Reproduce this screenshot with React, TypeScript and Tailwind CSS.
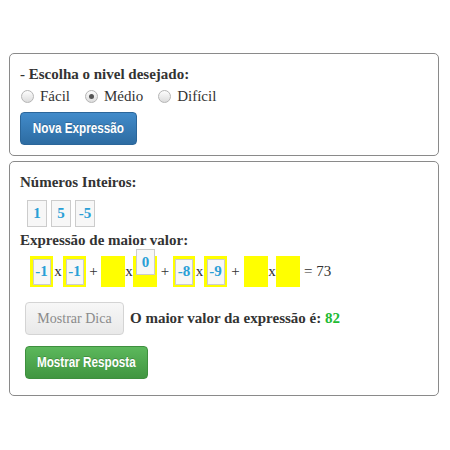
import { ReactNode } from "react";

function Radio({ label, checked }: { label: string; checked?: boolean }) {
  return (
    <label className="flex items-center mr-[15px]">
      <span className="w-[13px] h-[13px] rounded-full border border-[#b5b5b5] bg-gradient-to-b from-[#fdfdfd] to-[#dcdcdc] flex items-center justify-center">
        {checked && <span className="w-[5px] h-[5px] rounded-full bg-[#555]" />}
      </span>
      <span className="ml-[6px]">{label}</span>
    </label>
  );
}

// Liberation Sans squeezed to the width of Arial Narrow
function NarrowText({ children }: { children: ReactNode }) {
  return (
    <span className="inline-block whitespace-nowrap font-['Liberation_Sans',Arial,sans-serif] font-bold text-[15px] scale-x-[0.78] [text-shadow:0_-1px_0_rgba(0,0,0,0.2)]">
      {children}
    </span>
  );
}

function NumBox({ value }: { value: string }) {
  return (
    <div className="w-[20px] h-[27px] border border-[#cccccc] bg-[#f7f7f7] flex items-center justify-center font-bold text-[#2a9fd6]">
      {value}
    </div>
  );
}

function Slot({ value, w = "w-[23px]" }: { value?: string; w?: string }) {
  return (
    <div className={`${w} h-[31px] bg-[#ffff00] flex items-center justify-center`}>
      {value && (
        <div className="w-[18px] h-[26px] border border-[#cccccc] bg-[#f7f7f7] flex items-center justify-center font-bold text-[#2a9fd6]">
          {value}
        </div>
      )}
    </div>
  );
}

function Op({ children, w }: { children: ReactNode; w: string }) {
  return <span className={`${w} text-center`}>{children}</span>;
}

export default function App() {
  return (
    <div className="font-['Liberation_Serif',serif] text-[15px] text-[#333] pt-[53px] px-[9px]">
      {/* Nivel */}
      <div className="w-[430px] border border-[#8a8a8a] rounded-[5px] px-[10px] py-[10px]">
        <div className="font-bold leading-[20px]">- Escolha o nivel desejado:</div>
        <div className="flex items-center h-[20px] mt-[2px] ml-[1px]">
          <Radio label="Fácil" />
          <Radio label="Médio" checked />
          <Radio label="Difícil" />
        </div>
        <button className="mt-[6px] h-[33px] w-[117px] rounded-[4px] border border-[#2b669a] bg-gradient-to-b from-[#428bca] to-[#2d6ca2] text-white flex items-center justify-center">
          <NarrowText>Nova Expressão</NarrowText>
        </button>
      </div>

      {/* Exercicio */}
      <div className="w-[430px] mt-[5px] border border-[#8a8a8a] rounded-[5px] px-[10px] pt-[10px] pb-[16px]">
        <div className="font-bold leading-[20px]">Números Inteiros:</div>
        <div className="flex gap-[4px] mt-[8px] ml-[7px]">
          <NumBox value="1" />
          <NumBox value="5" />
          <NumBox value="-5" />
        </div>
        <div className="font-bold leading-[20px] mt-[3px]">Expressão de maior valor:</div>
        <div className="flex items-center h-[31px] mt-[6px] ml-[10px]">
          <Slot value="-1" />
          <Op w="w-[10px]">x</Op>
          <Slot value="-1" />
          <Op w="w-[15px]">+</Op>
          <Slot w="w-[24px]" />
          <Op w="w-[8px]">x</Op>
          <div className="w-[24px] h-[31px] bg-[#ffff00] relative">
            <div className="absolute left-[3px] top-[-7px] w-[19px] h-[26px] border border-[#cccccc] bg-[#f7f7f7] flex items-center justify-center font-bold text-[#2a9fd6]">
              0
            </div>
          </div>
          <Op w="w-[16px]">+</Op>
          <Slot value="-8" w="w-[22px]" />
          <Op w="w-[9px]">x</Op>
          <Slot value="-9" />
          <Op w="w-[17px]">+</Op>
          <Slot w="w-[24px]" />
          <Op w="w-[8px]">x</Op>
          <Slot w="w-[24px]" />
          <span className="ml-[4px]">= 73</span>
        </div>
        <div className="flex items-center mt-[15px] ml-[5px]">
          <button
            disabled
            className="h-[33px] w-[99px] rounded-[4px] border border-[#d4d4d4] bg-gradient-to-b from-[#f7f7f7] to-[#e9e9e9] text-[#8a8a8a] text-[14px] whitespace-nowrap"
          >
            Mostrar Dica
          </button>
          <span className="ml-[6px] font-bold">
            O maior valor da expressão é: <span className="text-[#22bb33]">82</span>
          </span>
        </div>
        <button className="mt-[11px] ml-[5px] h-[33px] w-[123px] rounded-[4px] border border-[#3e8f3e] bg-gradient-to-b from-[#5cb85c] to-[#419641] text-white flex items-center justify-center">
          <NarrowText>Mostrar Resposta</NarrowText>
        </button>
      </div>
    </div>
  );
}
